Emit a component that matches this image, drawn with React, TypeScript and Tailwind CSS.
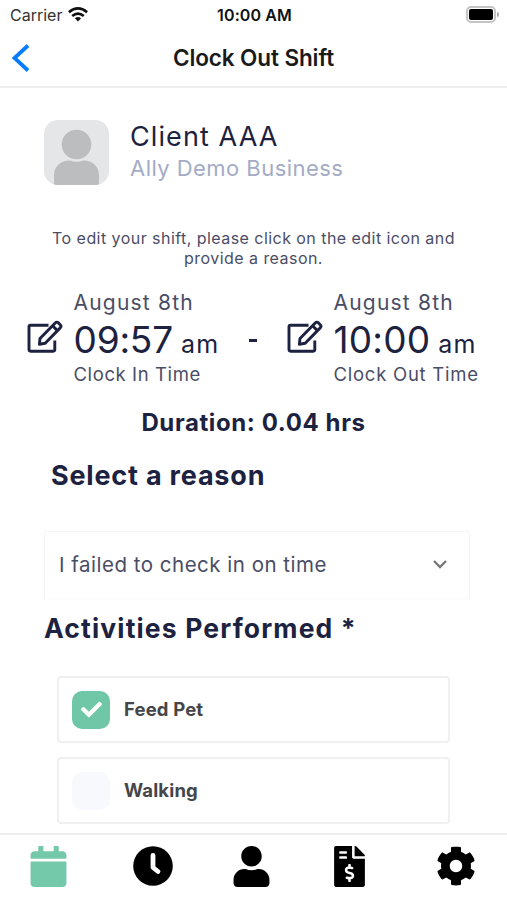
import { useState } from "react";
import clsx from "clsx";
import {
  FaCalendar,
  FaCheck,
  FaCog,
  FaFileInvoiceDollar,
  FaUser,
} from "react-icons/fa";

type TimeProps = {
  date: string;
  time: string;
  label: string;
  timeClass: string;
  labelClass: string;
};

const activityList = ["Feed Pet", "Walking"];

const tabs = [
  { name: "Schedule", icon: FaCalendar, className: "h-[41px] w-[41px]" },
  { name: "Clock", icon: ClockIcon, className: "ml-[64px] h-[40px] w-[40px]" },
  { name: "Profile", icon: FaUser, className: "ml-[58px] h-[41px] w-[41px]" },
  { name: "Invoices", icon: FaFileInvoiceDollar, className: "ml-[57px] h-[41px] w-[41px]" },
  { name: "Settings", icon: FaCog, className: "ml-[66px] h-[40px] w-[40px]" },
];

function ClockIcon({ className }: { className?: string }) {
  return (
    <svg viewBox="0 0 40 40" className={className} fill="currentColor">
      <circle cx="20" cy="20" r="19.8" />
      <path d="M20 9.5V21.5L25 25.5" fill="none" stroke="#fff" strokeWidth="4.8" strokeLinejoin="round" strokeLinecap="round" />
    </svg>
  );
}

function EditIcon() {
  return (
    <svg
      viewBox="0 0 36 34"
      className="h-[34px] w-[36px]"
      fill="none"
      stroke="#1c2240"
      strokeWidth="2.9"
      strokeLinejoin="round"
    >
      <path d="M21.5 5.2H3.6Q2 5.2 2 6.8V29.6Q2 31.2 3.6 31.2H26.2Q27.8 31.2 27.8 29.6V20.5" />
      <path d="M12.4 24.2L13 18.4L28.2 2.9Q29.8 1.3 31.4 2.9L33.2 4.7Q34.8 6.3 33.2 7.9L18.2 23.3Z" />
      <path d="M25.6 5.8L30.4 10.6" />
    </svg>
  );
}

function WifiIcon() {
  return (
    <svg viewBox="0 0 20 15" className="h-[15px] w-[20px]" fill="none" stroke="#111" strokeWidth="2.6">
      <path d="M0.9 5.3Q10 -2.4 19.1 5.3" />
      <path d="M4.2 9Q10 4.1 15.8 9" />
      <path d="M10 14.4L6.9 11.3Q10 8.8 13.1 11.3Z" fill="#111" stroke="none" />
    </svg>
  );
}

function TimeBlock({ date, time, label, timeClass, labelClass }: TimeProps) {
  return (
    <div className="flex w-[192px] shrink-0">
      <button aria-label={`Edit ${label}`} className="mt-[30px] h-[34px] w-[46.5px] shrink-0">
        <EditIcon />
      </button>
      <div className="whitespace-nowrap text-[#1c2240]">
        <p className="h-[24px] text-[21px] leading-[26px] tracking-[1.2px] text-[#4a4d66]">{date}</p>
        <p className="flex h-[50px] items-baseline leading-[52px]">
          <span className={clsx("text-[37px]", timeClass)}>{time}</span>
          <span className="ml-[8px] text-[25px] tracking-[1.3px]">am</span>
        </p>
        <p className={clsx("h-[20px] text-[18.5px] leading-[20px] text-[#4a4d66]", labelClass)}>
          {label}
        </p>
      </div>
    </div>
  );
}

export default function App() {
  const [checked, setChecked] = useState<string[]>(["Feed Pet"]);
  const [activeTab, setActiveTab] = useState("Schedule");

  function toggle(name: string) {
    setChecked((prev) =>
      prev.includes(name) ? prev.filter((n) => n !== name) : [...prev, name],
    );
  }

  return (
    <div className="flex h-[900px] w-[507px] flex-col overflow-hidden bg-white font-['Inter',sans-serif]">
      {/* status bar */}
      <div className="grid h-[29px] shrink-0 grid-cols-3 items-center pr-[8px] pl-[10px] text-[16px]">
        <div className="flex items-center gap-[6px] text-[#333]">
          Carrier
          <WifiIcon />
        </div>
        <p className="text-center font-semibold tracking-[0.1px] text-[#111]">10:00 AM</p>
        <div className="flex items-center justify-end gap-px">
          <div className="h-[17px] w-[30px] rounded-[5px] border-2 border-[#c4c4c4] p-px">
            <div className="h-full rounded-[2px] bg-black" />
          </div>
          <div className="h-[5px] w-[2px] rounded-r bg-[#aaa]" />
        </div>
      </div>

      {/* header */}
      <header className="grid h-[59px] shrink-0 grid-cols-[60px_1fr_60px] items-center border-b-2 border-[#eeeeee]">
        <button aria-label="Back" className="pl-[12px]">
          <svg viewBox="0 0 18 28" className="h-[28px] w-[18px]" fill="none" stroke="#087cff" strokeWidth="3.8">
            <path d="M16 1.5L2.5 14L16 26.5" />
          </svg>
        </button>
        <h1 className="text-center text-[22.5px] font-semibold tracking-[-0.1px] text-[#1a1a1a]">
          Clock Out Shift
        </h1>
      </header>

      <main className="flex min-h-0 flex-1 flex-col overflow-hidden">
        <section className="mt-[32px] flex h-[65px] shrink-0 pl-[44px]">
          <svg viewBox="0 0 65 65" className="h-[65px] w-[65px] rounded-[14px] bg-[#e4e6e7]" fill="#bbbdbf">
            <circle cx="32.5" cy="24.5" r="14.8" />
            <path d="M10 65V55Q11 41 26 40.5Q32.5 43 39 40.5Q54 41 55 55V65Z" />
          </svg>
          <div className="ml-[21px] whitespace-nowrap">
            <h2 className="h-[33px] text-[27px] leading-[33px] tracking-[1.1px] text-[#1c2240]">Client AAA</h2>
            <p className="text-[22px] leading-[31px] tracking-[0.45px] text-[#a4abc5]">Ally Demo Business</p>
          </div>
        </section>

        <p className="mt-[44px] h-[39px] shrink-0 text-center text-[16px] leading-[19.5px] tracking-[0.45px] text-[#4a4d66]">
          To edit your shift, please click on the edit icon and
          <br />
          provide a reason.
        </p>

        <section className="mt-[22px] flex h-[96px] shrink-0 pl-[27px]">
          <TimeBlock
            date="August 8th"
            time="09:57"
            label="Clock In Time"
            timeClass="tracking-[-0.2px]"
            labelClass="tracking-[0.6px]"
          />
          <div className="mt-[49px] w-[68px] pl-[30px]">
            <div className="h-[3px] w-[8px] bg-[#1c2240]" />
          </div>
          <TimeBlock
            date="August 8th"
            time="10:00"
            label="Clock Out Time"
            timeClass="tracking-[0.2px]"
            labelClass="tracking-[0.75px]"
          />
        </section>

        <p className="mt-[22px] h-[30px] shrink-0 text-center text-[24px] leading-[30px] font-bold tracking-[0.6px] text-[#1c2240]">
          Duration: 0.04 hrs
        </p>
        <h3 className="mt-[21px] h-[34px] shrink-0 pl-[51px] text-[27px] leading-[34px] font-bold tracking-[0.8px] text-[#1c2240]">
          Select a reason
        </h3>

        <button className="mt-[38px] ml-[44px] flex h-[69px] w-[426px] shrink-0 items-center justify-between border border-[#f6f6f7] border-b-[#fbfbfc] pr-[22px] pl-[14px] text-[20.5px] tracking-[0.5px] text-[#4a4d66]">
          I failed to check in on time
          <svg viewBox="0 0 14 9" className="mb-[2px] h-[9px] w-[14px]" fill="none" stroke="#777" strokeWidth="2.4">
            <path d="M1 1L7 7L13 1" />
          </svg>
        </button>

        <h3 className="mt-[11px] h-[34px] shrink-0 pl-[44px] text-[26.5px] leading-[34px] font-bold tracking-[1.15px] text-[#1c2240]">
          Activities Performed *
        </h3>

        <div className="mt-[31px] flex flex-col gap-[14px] pr-[57px] pl-[57px]">
          {activityList.map((name) => (
            <button
              key={name}
              onClick={() => toggle(name)}
              className="flex h-[67px] items-center rounded-[4px] border-2 border-[#f0f0f1] pl-[13px] text-[18.5px] font-bold tracking-[0.15px] text-[#454649]"
            >
              <span
                className={clsx(
                  "mr-[14px] flex h-[38px] w-[38px] items-center justify-center rounded-[10px] text-white",
                  checked.includes(name) ? "bg-[#6fc7a8]" : "bg-[#f7f9fd]",
                )}
              >
                {checked.includes(name) && <FaCheck className="text-[21px]" />}
              </span>
              {name}
            </button>
          ))}
        </div>
      </main>

      <nav className="flex h-[67px] shrink-0 items-start border-t-2 border-[#eeeeef] pt-[10.5px] pl-[28px]">
        {tabs.map(({ name, icon: Icon, className }) => (
          <button
            key={name}
            aria-label={name}
            onClick={() => setActiveTab(name)}
            className={activeTab === name ? "text-[#75c9ab]" : "text-black"}
          >
            <Icon className={className} />
          </button>
        ))}
      </nav>
    </div>
  );
}
